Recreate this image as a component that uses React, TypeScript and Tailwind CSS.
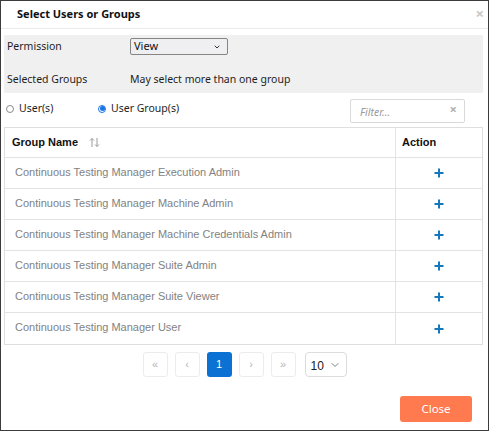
import { ChevronDown } from "lucide-react";

const groups = [
  "Continuous Testing Manager Execution Admin",
  "Continuous Testing Manager Machine Admin",
  "Continuous Testing Manager Machine Credentials Admin",
  "Continuous Testing Manager Suite Admin",
  "Continuous Testing Manager Suite Viewer",
  "Continuous Testing Manager User",
];

const ui = { fontFamily: '"Noto Sans", "Open Sans", sans-serif' };
const arial = { fontFamily: '"Liberation Sans", Arial, sans-serif' };

function PageButton({ children, active }: { children: React.ReactNode; active?: boolean }) {
  return (
    <button
      className={
        active
          ? "w-[25px] h-[25px] rounded-[3px] bg-[#0b72d3] text-white text-[11px] flex items-center justify-center"
          : "w-[25px] h-[25px] rounded-[3px] border border-[#ececec] bg-white text-[#b5b5b5] text-[11px] flex items-center justify-center"
      }
      style={arial}
    >
      {children}
    </button>
  );
}

export default function App() {
  return (
    <div className="w-[489px] h-[431px] bg-white border border-[#3c3c3c] flex flex-col" style={ui}>
      {/* Header */}
      <div className="h-[28px] flex items-center justify-between pl-[16px] pr-[4px] border-b border-[#ebebeb]">
        <span className="text-[11px] font-bold text-[#111]">Select Users or Groups</span>
        <span className="text-[15px] font-bold text-[#c8c8c8] leading-none -mt-[2px]">×</span>
      </div>

      {/* Permission panel */}
      <div className="mt-[6px] ml-[3px] mr-[5px] bg-[#f0f0f0] h-[58px] pt-[3px] pl-[3px] text-[10.5px] text-[#1e1e1e]">
        <div className="flex items-center h-[17px]">
          <span className="w-[123px]">Permission</span>
          <div className="w-[98px] h-[17px] bg-[#efeff2] border border-[#858585] rounded-[2px] flex items-center justify-between pl-[3px] pr-[6px]">
            <span className="text-[11px] text-[#111]">View</span>
            <ChevronDown size={8} strokeWidth={3} className="text-[#333]" />
          </div>
        </div>
        <div className="flex items-center h-[16px] mt-[17px]">
          <span className="w-[123px]">Selected Groups</span>
          <span>May select more than one group</span>
        </div>
      </div>

      {/* Radio row + filter */}
      <div className="h-[34px] flex items-center pl-[5px] pr-[23px] text-[10.5px] text-[#1e1e1e]">
        <div className="flex items-center gap-[5px] w-[92px] -mt-[3px]">
          <span className="w-[8px] h-[8px] rounded-full border border-[#8a8a8a] bg-white" />
          <span>User(s)</span>
        </div>
        <div className="flex items-center gap-[5px] -mt-[3px]">
          <span className="w-[8px] h-[8px] rounded-full border border-[#1a73e8] bg-white flex items-center justify-center">
            <span className="w-[5px] h-[5px] rounded-full bg-[#1a73e8]" />
          </span>
          <span>User Group(s)</span>
        </div>
        <div className="ml-auto mt-[2px] w-[115px] h-[24px] border border-[#d9d9d9] rounded-[2px] flex items-start justify-between pl-[9px] pr-[7px] pt-[3px]">
          <span className="italic text-[10.5px] text-[#9a9a9a] mt-[2px]">Filter...</span>
          <span className="text-[13px] font-bold text-[#b0b0b0] leading-none">×</span>
        </div>
      </div>

      {/* Table */}
      <div className="ml-[3px] mr-[5px] border border-[#dedede]" style={arial}>
        <div className="flex h-[30px] border-b border-[#e3e3e3]">
          <div className="flex-1 flex items-center pl-[7px] gap-[11px] border-r border-[#e3e3e3]">
            <span className="text-[11px] font-bold text-[#111]">Group Name</span>
            <svg width="11" height="11" viewBox="0 0 11 11" fill="none" stroke="#9a9a9a" strokeWidth="1">
              <path d="M3 10V1.5M1 3.5L3 1.5L5 3.5" />
              <path d="M8 1V9.5M6 7.5L8 9.5L10 7.5" />
            </svg>
          </div>
          <div className="w-[86px] flex items-center pl-[6px]">
            <span className="text-[11px] font-bold text-[#111]">Action</span>
          </div>
        </div>
        {groups.map((g, i) => (
          <div
            key={g}
            className={`flex h-[31px] ${i < groups.length - 1 ? "border-b border-[#e3e3e3]" : ""}`}
          >
            <div className="flex-1 flex items-center pl-[10px] border-r border-[#e3e3e3]">
              <span className="text-[11px] text-[#828282] -mt-[2px]">{g}</span>
            </div>
            <div className="w-[86px] flex items-center justify-center">
              <svg width="10" height="10" viewBox="0 0 10 10">
                <path d="M4 0.5H6V4H9.5V6H6V9.5H4V6H0.5V4H4Z" fill="#1578bd" />
              </svg>
            </div>
          </div>
        ))}
      </div>

      {/* Pagination */}
      <div className="mt-[7px] flex items-center justify-center gap-[7px]">
        <PageButton>«</PageButton>
        <PageButton>‹</PageButton>
        <PageButton active>1</PageButton>
        <PageButton>›</PageButton>
        <PageButton>»</PageButton>
        <div
          className="ml-[2px] w-[42px] h-[25px] border border-[#dcdcdc] rounded-[4px] flex items-center justify-between pl-[5px] pr-[5px] text-[12px] text-[#222]"
          style={arial}
        >
          <span className="mt-[2px]">10</span>
          <ChevronDown size={12} strokeWidth={1.5} className="text-[#555]" />
        </div>
      </div>

      {/* Footer */}
      <div className="flex-1 flex items-end justify-end pr-[16px] pb-[8px]">
        <button
          className="w-[72px] h-[26px] rounded-[3px] bg-[#ff7a4f] text-white text-[11.5px]"
          style={ui}
        >
          Close
        </button>
      </div>
    </div>
  );
}
